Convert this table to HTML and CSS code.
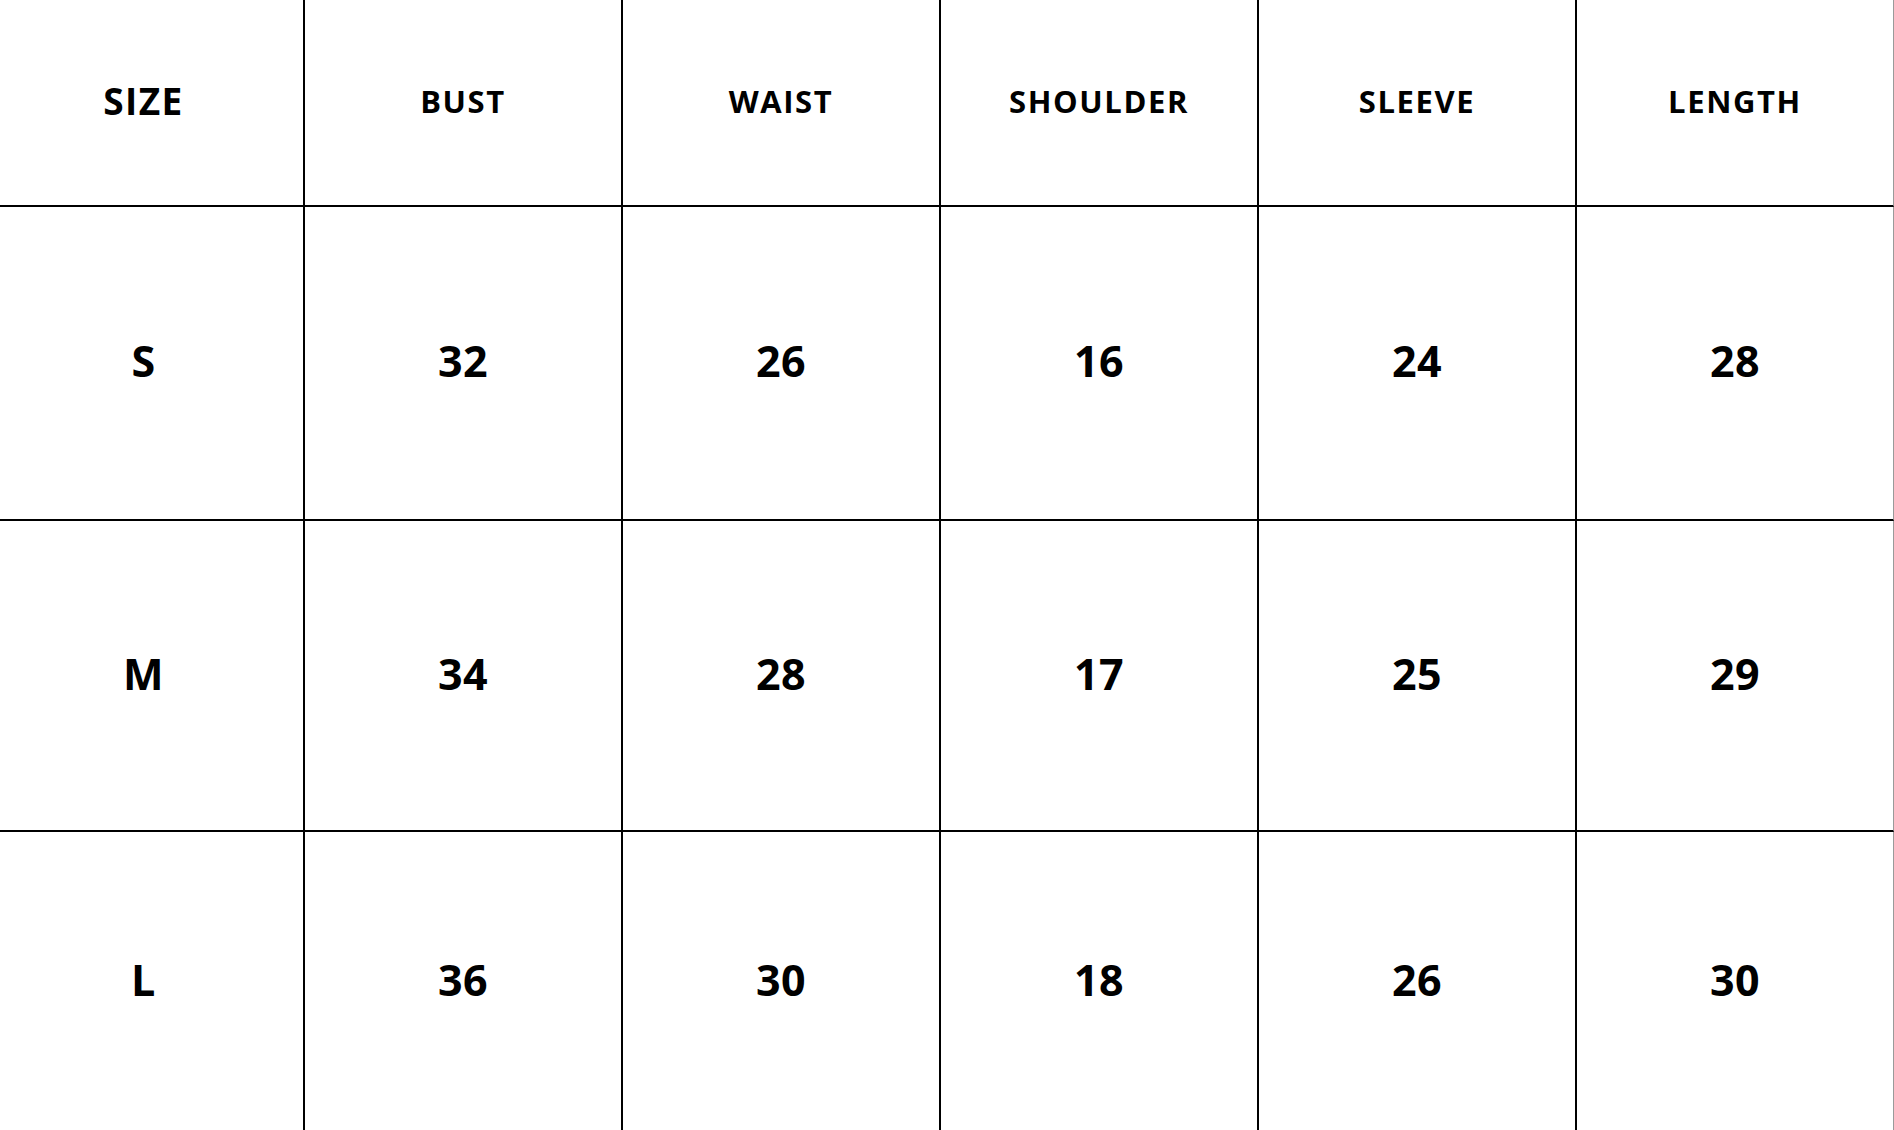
FILE: index.html
```html
<!DOCTYPE html>
<html lang="en">
<head>
<meta charset="utf-8">
<title>Size Chart</title>
<link rel="stylesheet" href="styles.css">
</head>
<body>
<div class="chart">
  <div class="cell head first size-label">SIZE</div>
  <div class="cell head">BUST</div>
  <div class="cell head">WAIST</div>
  <div class="cell head">SHOULDER</div>
  <div class="cell head">SLEEVE</div>
  <div class="cell head last">LENGTH</div>

  <div class="cell val first">S</div>
  <div class="cell val">32</div>
  <div class="cell val">26</div>
  <div class="cell val">16</div>
  <div class="cell val">24</div>
  <div class="cell val last">28</div>

  <div class="cell val first">M</div>
  <div class="cell val">34</div>
  <div class="cell val">28</div>
  <div class="cell val">17</div>
  <div class="cell val">25</div>
  <div class="cell val last">29</div>

  <div class="cell val first bottom">L</div>
  <div class="cell val bottom">36</div>
  <div class="cell val bottom">30</div>
  <div class="cell val bottom">18</div>
  <div class="cell val bottom">26</div>
  <div class="cell val last bottom">30</div>
</div>
</body>
</html>
```
FILE: styles.css
```css
html, body {
  margin: 0;
  padding: 0;
  background: #ffffff;
  overflow: hidden;
}

body {
  width: 1894px;
  height: 1130px;
  font-family: "Open Sans", "Liberation Sans", sans-serif;
  color: #000;
}

.chart {
  display: grid;
  grid-template-columns: 305px 318px 318px 318px 318px 317px;
  grid-template-rows: 207px 314px 311px 300px;
  width: 1894px;
}

.cell {
  display: flex;
  align-items: center;
  justify-content: center;
  border-right: 2px solid #000;
  border-bottom: 2px solid #000;
  font-weight: 700;
  box-sizing: border-box;
}

.cell.first {
  padding-right: 16px;
}

.cell.last {
  border-right: 1px solid #9a9a9a;
}

.cell.bottom {
  border-bottom: none;
}

.head {
  font-size: 31px;
  letter-spacing: 1.6px;
  padding-bottom: 4px;
}

.head.size-label {
  font-size: 37px;
  letter-spacing: 1.4px;
}

.val {
  font-size: 43px;
  letter-spacing: 0.5px;
  padding-bottom: 5px;
}
```
